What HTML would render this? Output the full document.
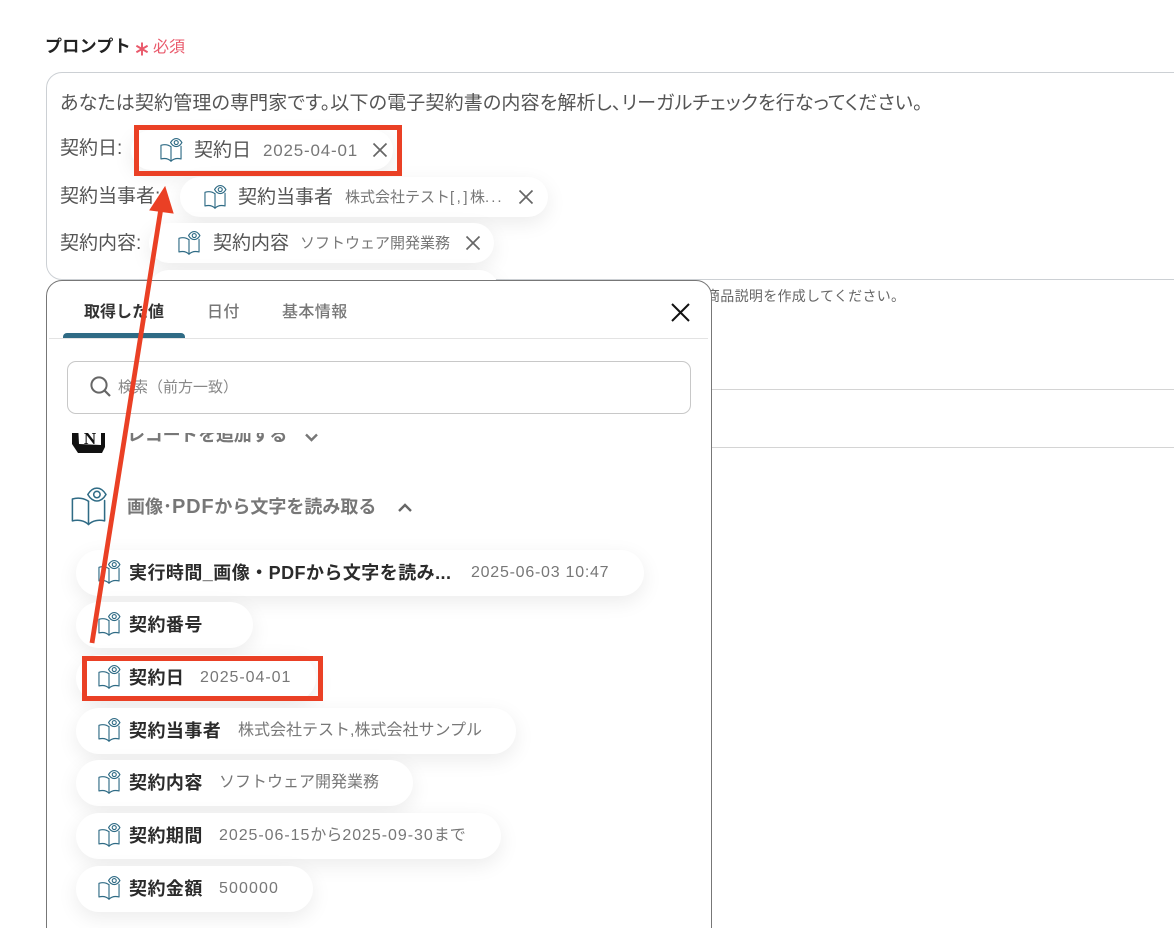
<!DOCTYPE html>
<html lang="ja"><head><meta charset="utf-8">
<style>
html,body{margin:0;padding:0;background:#fff;overflow:hidden}
#r{position:relative;width:1174px;height:928px;overflow:hidden;background:#fff;font-family:"Liberation Sans","Noto Sans CJK JP",sans-serif;color:#555}
#r div{position:absolute;white-space:nowrap}
.pill{background:#fff;border-radius:24px;box-shadow:0 6px 20px rgba(0,0,0,.08)}
.n{font-size:18px;font-weight:700;color:#2b2b2b;line-height:24px;margin-top:1px;letter-spacing:.45px}
.v{font-size:16px;color:#777;line-height:24px;margin-top:1px}
.s{font-size:15px;color:#777;line-height:24px;margin-top:1px}
.bn{font-size:19px;color:#555;line-height:24px;margin-top:1px}
.d{letter-spacing:.95px}
.tab{font-size:16px;font-weight:500;line-height:20px;color:#777;letter-spacing:.4px}
svg{position:absolute;overflow:visible}
</style></head><body><div id="r">
<svg width="0" height="0" style="position:absolute"><defs><g id="bk" fill="none" stroke="#2f6b85" stroke-linejoin="round" stroke-linecap="round"><path d="M12.5 10C9.5 7.8 5 7.2 1 8.4V24C5 23 9.5 23.6 12.5 26.6C15.5 23.6 20 23 24 24V9.5"/><path d="M12.5 10V26.6"/><path d="M12 5.2C14 1.8 16.2 .6 18.5 .6C20.8 .6 23 1.8 25 5.2C23 8.6 20.8 9.8 18.5 9.8C16.2 9.8 14 8.6 12 5.2Z"/><circle cx="18.5" cy="5.2" r="2.3"/></g></defs></svg>

<div style="left:45px;top:37px;font-size:17px;font-weight:700;color:#222;line-height:20px;letter-spacing:.3px">プロンプト</div>
<svg style="left:135px;top:42px" width="14" height="14" viewBox="0 0 13 13"><path d="M6.5 0.5V12.5M1.3 3.5L11.7 9.5M11.7 3.5L1.3 9.5" stroke="#e9596b" stroke-width="1.8"/></svg>
<div style="left:153px;top:38px;font-size:16px;line-height:20px;color:#e9596b">必須</div>

<div style="left:46px;top:72px;width:1300px;height:206px;border:1px solid #ccd0d4;border-radius:16px;background:#fff"></div>
<div style="left:60px;top:92px;font-size:19px;line-height:24px;color:#555;font-feature-settings:'palt';letter-spacing:.16px">あなたは契約管理の専門家です。以下の電子契約書の内容を解析し、リーガルチェックを行なってください。</div>
<div class="bn" style="left:60px;top:136px">契約日:</div>
<div class="bn" style="left:60px;top:184px">契約当事者:</div>
<div class="bn" style="left:60px;top:231px">契約内容:</div>

<div class="pill" style="left:131px;top:130px;width:262px;height:40px"></div>
<svg style="left:160px;top:138px" width="22" height="24" viewBox="0 0 25 27.5"><use href="#bk" stroke-width="1.3"/></svg>
<div class="bn" style="left:194px;top:138px">契約日</div>
<div class="s" style="left:263px;top:138px;font-size:17px;letter-spacing:.8px">2025-04-01</div>
<svg style="left:373px;top:143px" width="14" height="14" viewBox="0 0 14 14"><path d="M.5 .5L13.5 13.5M13.5 .5L.5 13.5" stroke="#666" stroke-width="1.7"/></svg>

<div class="pill" style="left:180px;top:177px;width:368px;height:40px"></div>
<svg style="left:204px;top:185px" width="22" height="24" viewBox="0 0 25 27.5"><use href="#bk" stroke-width="1.3"/></svg>
<div class="bn" style="left:238px;top:185px">契約当事者</div>
<div class="s" style="left:345px;top:185px">株式会社テスト<span style="letter-spacing:2.5px">[,]</span>株<span style="letter-spacing:2px">...</span></div>
<svg style="left:519px;top:190px" width="14" height="14" viewBox="0 0 14 14"><path d="M.5 .5L13.5 13.5M13.5 .5L.5 13.5" stroke="#666" stroke-width="1.7"/></svg>

<div class="pill" style="left:149px;top:223px;width:345px;height:40px"></div>
<svg style="left:178px;top:231px" width="22" height="24" viewBox="0 0 25 27.5"><use href="#bk" stroke-width="1.3"/></svg>
<div class="bn" style="left:213px;top:231px">契約内容</div>
<div class="s" style="left:300px;top:231px">ソフトウェア開発業務</div>
<svg style="left:466px;top:236px" width="14" height="14" viewBox="0 0 14 14"><path d="M.5 .5L13.5 13.5M13.5 .5L.5 13.5" stroke="#666" stroke-width="1.7"/></svg>
<div class="pill" style="left:149px;top:270px;width:350px;height:40px"></div>

<div style="left:706px;top:287px;font-size:14px;line-height:18px;color:#666;letter-spacing:.3px">商品説明を作成してください。</div>
<div style="left:712px;top:389px;width:470px;height:1px;background:#d4d4d4"></div>
<div style="left:712px;top:447px;width:470px;height:1px;background:#d4d4d4"></div>

<!-- panel -->
<div style="left:46px;top:280px;width:664px;height:700px;border:1px solid #777;border-radius:16px;background:#fff"></div>
<div class="tab" style="left:84px;top:303px;font-weight:700;color:#333;letter-spacing:0">取得した値</div>
<div class="tab" style="left:207px;top:303px">日付</div>
<div class="tab" style="left:282px;top:303px">基本情報</div>
<div style="left:63px;top:333px;width:122px;height:5px;background:#2f6b85;border-radius:4px 4px 0 0"></div>
<div style="left:49px;top:338px;width:659px;height:1px;background:#e3e3e3"></div>
<svg style="left:671px;top:303px" width="19" height="19" viewBox="0 0 19 19"><path d="M1 1L18 18M18 1L1 18" stroke="#111" stroke-width="2"/></svg>

<div style="left:127px;top:423px;font-size:18px;font-weight:700;line-height:24px;color:#777;letter-spacing:-.2px">レコードを追加する</div>
<svg style="left:71px;top:424px" width="35" height="29" viewBox="0 0 35 29"><path d="M1 0H34V23L31 29H7L1 20Z" fill="#111"/><path d="M7 0H30V21L8 20Z" fill="#fff"/><text x="19" y="20" font-family="Liberation Serif" font-size="17" font-weight="700" text-anchor="middle" fill="#111">N</text></svg>
<svg style="left:304px;top:433px" width="15" height="9" viewBox="0 0 15 9"><path d="M2 1.5L7.5 7L13 1.5" fill="none" stroke="#777" stroke-width="2.4"/></svg>
<div style="left:50px;top:414px;width:650px;height:19px;background:#fff"></div>

<div style="left:67px;top:361px;width:622px;height:51px;border:1px solid #c8c8c8;border-radius:9px;background:#fff"></div>
<svg style="left:90px;top:376px" width="22" height="22" viewBox="0 0 22 22"><circle cx="9" cy="9" r="7.6" fill="none" stroke="#666" stroke-width="2"/><path d="M14.5 14.5L20 20" stroke="#666" stroke-width="2.2"/></svg>
<div style="left:118px;top:378px;font-size:15px;line-height:20px;color:#888">検索（前方一致）</div>

<svg style="left:71px;top:487px" width="35" height="39" viewBox="0 0 25 27.5"><use href="#bk" stroke-width="1.1"/></svg>
<div style="left:127px;top:495px;font-size:18px;font-weight:700;line-height:24px;color:#777">画像･<span style="font-size:20px;letter-spacing:.8px">PDF</span>から文字を読み取る</div>
<svg style="left:397px;top:503px" width="16" height="10" viewBox="0 0 16 10"><path d="M2 8L8 2L14 8" fill="none" stroke="#666" stroke-width="2.4"/></svg>

<div class="pill" style="left:76px;top:550px;width:568px;height:46px"></div>
<svg style="left:98px;top:560px" width="22" height="24" viewBox="0 0 25 27.5"><use href="#bk" stroke-width="1.3"/></svg>
<div class="n" style="left:129px;top:560px">実行時間_画像・PDFから文字を読み...</div>
<div class="v d" style="left:471px;top:560px;letter-spacing:.75px">2025-06-03 10:47</div>

<div class="pill" style="left:76px;top:602px;width:177px;height:46px"></div>
<svg style="left:98px;top:612px" width="22" height="24" viewBox="0 0 25 27.5"><use href="#bk" stroke-width="1.3"/></svg>
<div class="n" style="left:129px;top:612px">契約番号</div>

<div class="pill" style="left:76px;top:655px;width:240px;height:46px"></div>
<svg style="left:98px;top:665px" width="22" height="24" viewBox="0 0 25 27.5"><use href="#bk" stroke-width="1.3"/></svg>
<div class="n" style="left:129px;top:665px">契約日</div>
<div class="v d" style="left:200px;top:665px">2025-04-01</div>

<div class="pill" style="left:76px;top:708px;width:440px;height:46px"></div>
<svg style="left:98px;top:718px" width="22" height="24" viewBox="0 0 25 27.5"><use href="#bk" stroke-width="1.3"/></svg>
<div class="n" style="left:129px;top:718px">契約当事者</div>
<div class="v" style="left:238px;top:718px">株式会社テスト,株式会社サンプル</div>

<div class="pill" style="left:76px;top:760px;width:337px;height:46px"></div>
<svg style="left:98px;top:770px" width="22" height="24" viewBox="0 0 25 27.5"><use href="#bk" stroke-width="1.3"/></svg>
<div class="n" style="left:129px;top:770px">契約内容</div>
<div class="v" style="left:219px;top:770px">ソフトウェア開発業務</div>

<div class="pill" style="left:76px;top:813px;width:425px;height:46px"></div>
<svg style="left:98px;top:823px" width="22" height="24" viewBox="0 0 25 27.5"><use href="#bk" stroke-width="1.3"/></svg>
<div class="n" style="left:129px;top:823px">契約期間</div>
<div class="v" style="left:219px;top:823px"><span class="d">2025-06-15</span>から<span class="d">2025-09-30</span>まで</div>

<div class="pill" style="left:76px;top:866px;width:237px;height:46px"></div>
<svg style="left:98px;top:876px" width="22" height="24" viewBox="0 0 25 27.5"><use href="#bk" stroke-width="1.3"/></svg>
<div class="n" style="left:129px;top:876px">契約金額</div>
<div class="v" style="left:219px;top:876px;letter-spacing:1.1px">500000</div>

<!-- annotations -->
<div style="left:134px;top:125px;width:258px;height:41px;border:5px solid #ea4025"></div>
<div style="left:82px;top:656px;width:231px;height:35px;border:5px solid #ea4025"></div>
<svg style="left:0;top:0" width="1174" height="928" viewBox="0 0 1174 928"><path d="M92 643L161 208" stroke="#ea4025" stroke-width="4.8" fill="none"/><path d="M165 187L150 210L173 213Z" fill="#ea4025" stroke="#ea4025" stroke-width="1"/></svg>
</div></body></html>
